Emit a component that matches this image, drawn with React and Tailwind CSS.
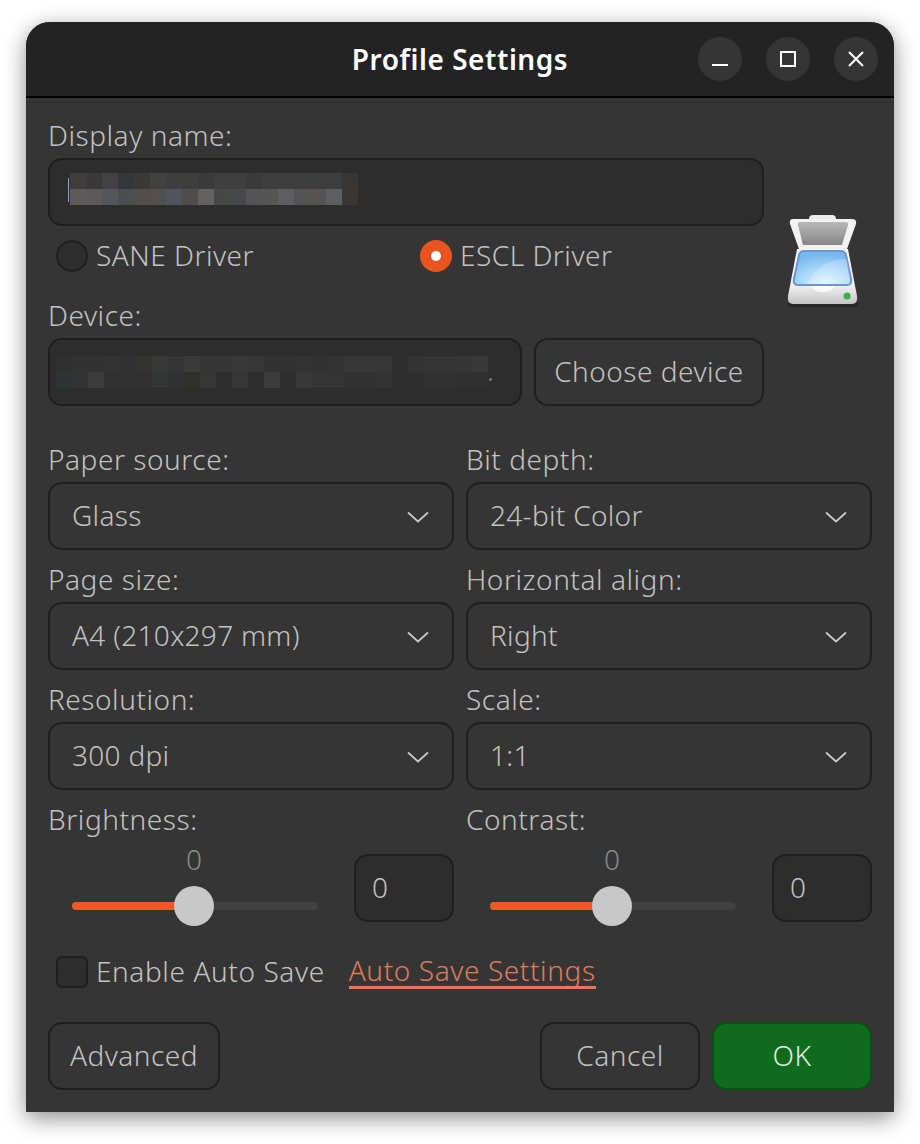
const FONT = "font-['Noto_Sans','Open_Sans',sans-serif]";

const NAME_ROWS = [
  ['#413d3c', '#393939', '#424242', '#34363a', '#3a3938', '#414141', '#3e3e3e', '#3e3e3e', '#3a3a3a', '#3f3f3f', '#3f3f3f', '#3a3a3a', '#3e3e3e', '#3e3e3e', '#3d3d3d', '#3c3e3d', '#3d3d3d', '#383634'],
  ['#5e5a59', '#5a5a5a', '#53565a', '#4d4e52', '#524e4c', '#514f4f', '#53545b', '#504c4c', '#626260', '#474747', '#47484c', '#545454', '#555555', '#5e5e62', '#545454', '#565452', '#5e5e60', '#3a3632'],
];

const DEVICE_ROWS = [
  ['#303030', '#323232', '#323232', '#333333', '#313131', '#333331', '#383838', '#343434', '#3a3a3a', '#353535', '#353535', '#383838', '#363636', '#323232', '#323232', '#333333', '#313131', '#333333', '#373737', '#373737', '#373737', '#2d2d2d', '#333333', '#343434', '#343434', '#353535', '#393939'],
  ['#2f3333', '#333333', '#3b3b3b', '#313131', '#313131', '#313131', '#323533', '#313131', '#2f2f2c', '#363636', '#2d2d2d', '#363636', '#2e2e2e', '#3c3c3c', '#2e2e2e', '#383838', '#343434', '#343434', '#313131', '#313131', '#333333', '#2e2e2e', '#2e2e2e', '#313131', '#313131', '#303030', '#303030'],
];

const Blur = ({ rows }) => (
  <div className="flex flex-col">
    {rows.map((row, i) => (
      <div key={i} className="flex">
        {row.map((c, j) => (
          <div key={j} className="w-4 h-4" style={{ backgroundColor: c }} />
        ))}
      </div>
    ))}
  </div>
);

const Label = ({ children }) => (
  <div className="h-[42px] flex items-center pb-1 text-[28px] tracking-[0.55px] text-[#c2c2c2] font-light leading-none">{children}</div>
);

const Chevron = () => (
  <svg width="22" height="12" viewBox="0 0 22 12" fill="none" stroke="#c8c8c8" strokeWidth="1.75" className="shrink-0 mt-0.5">
    <path d="M1 1.5 L11 10.5 L21 1.5" />
  </svg>
);

const Select = ({ label, value }) => (
  <div>
    <Label>{label}</Label>
    <div className="h-[68px] rounded-[14px] border-2 border-[#1f1f1f] bg-[#353535] flex items-center justify-between pl-[22px] pr-[23px] text-[28px] tracking-[0.3px] text-[#c2c2c2] font-light">
      <span className="-mt-0.5">{value}</span>
      <Chevron />
    </div>
  </div>
);

const Slider = ({ label }) => (
  <div>
    <Label>{label}</Label>
    <div className="mt-3 flex items-center h-[68px]">
      <div className="w-[306px] pl-6 pr-9 shrink-0">
        <div className="relative h-2 rounded-full bg-[#414141] translate-y-[18px]">
          <div className="h-2 w-[122px] rounded-full bg-[#ee5a24]" />
          <div className="absolute left-[102px] top-[-16px] w-10 h-10 rounded-full bg-[#c8c8c8]" />
          <span className="absolute left-[102px] top-[-57px] w-10 text-center text-[28px] leading-none font-light text-[#8a8a8a]">0</span>
        </div>
      </div>
      <div className="w-[100px] h-[68px] rounded-[14px] border-2 border-[#1f1f1f] bg-[#2d2d2d] flex items-center pl-4 pb-0.5 text-[28px] text-[#c2c2c2] font-light">0</div>
    </div>
  </div>
);

const Button = ({ children, className }) => (
  <button className={`h-[68px] rounded-[14px] border-2 pb-0.5 text-[28px] tracking-[0.5px] font-light flex items-center justify-center ${className}`}>{children}</button>
);

const Scanner = () => (
  <svg width="76" height="96" viewBox="0 0 76 96" className="shrink-0 blur-[0.4px]">
    <defs>
      <linearGradient id="lid" x1="0" y1="0" x2="0" y2="1">
        <stop offset="0" stopColor="#b8b8b8" />
        <stop offset="1" stopColor="#868686" />
      </linearGradient>
      <linearGradient id="base" x1="0" y1="0" x2="0" y2="1">
        <stop offset="0" stopColor="#f6f6f6" />
        <stop offset="0.7" stopColor="#ececec" />
        <stop offset="1" stopColor="#c4c4c4" />
      </linearGradient>
      <radialGradient id="glass" cx="0.55" cy="0.95" r="0.85">
        <stop offset="0" stopColor="#dff3fd" />
        <stop offset="0.55" stopColor="#a6d6f8" />
        <stop offset="1" stopColor="#78b8ee" />
      </radialGradient>
    </defs>
    <rect x="3" y="88" width="70" height="5" rx="2" fill="#000" opacity="0.25" />
    <path d="M24 5 Q24 1 28 1 H47 Q51 1 51 5 L51 7 H24 Z" fill="#ececec" />
    <path d="M8 5 H67 Q72 5 71 10 L62 35 H14 L5 10 Q4 5 8 5 Z" fill="#f2f2f2" />
    <path d="M13 11 Q12 8 16 8 H60 Q64 8 63 11 L57 31 H18 Z" fill="url(#lid)" />
    <path d="M12 35 H63 L72 82 Q73 90 67 90 H8 Q2 90 3 82 Z" fill="url(#base)" />
    <path d="M19 37 H56 Q60 37 61 41 L66 65 Q67 71 62 71 H13 Q8 71 9 65 L14 41 Q15 37 19 37 Z" fill="url(#glass)" stroke="#6d94d2" strokeWidth="2" />
    <path d="M30 58 Q44 44 62 45 L65 64 Q65 70 60 70 H20 Q26 66 30 58 Z" fill="#ffffff" opacity="0.22" />
    <path d="M26 72 H50 Q47 78 38 78 Q29 78 26 72 Z" fill="#ffffff" opacity="0.75" />
    <circle cx="62" cy="82" r="3.5" fill="#35b53a" />
  </svg>
);

const CloseBtn = ({ children }) => (
  <div className="w-11 h-11 rounded-full bg-[#353535] flex items-center justify-center">{children}</div>
);

export default function App() {
  return (
    <div className={`min-h-[1144px] bg-white pt-[22px] pl-[26px] ${FONT}`}>
      <div className="w-[868px] h-[1090px] rounded-t-[24px] bg-[#353535] shadow-[0_6px_22px_rgba(0,0,0,0.45)] overflow-hidden">
        <div className="relative h-[76px] bg-[#232323] border-b-2 border-black flex items-center justify-end pr-4 gap-6">
          <div className="absolute inset-0 flex items-center justify-center text-[28px] tracking-[0.55px] font-semibold text-white">Profile Settings</div>
          <CloseBtn>
            <svg width="16" height="16" viewBox="0 0 16 16" className="relative"><rect y="13" width="16" height="2" fill="#fff" /></svg>
          </CloseBtn>
          <CloseBtn>
            <svg width="16" height="16" viewBox="0 0 16 16" fill="none" stroke="#fff" strokeWidth="2"><rect x="1" y="1" width="14" height="14" /></svg>
          </CloseBtn>
          <CloseBtn>
            <svg width="16" height="16" viewBox="0 0 16 16" fill="none" stroke="#fff" strokeWidth="2"><path d="M1 1 L15 15 M15 1 L1 15" /></svg>
          </CloseBtn>
        </div>

        <div className="px-[22px] pt-[18px]">
          <div className="flex">
            <div className="w-[716px]">
              <Label>Display name:</Label>
              <div className="relative h-[68px] rounded-[14px] border-2 border-[#1f1f1f] bg-[#2d2d2d] flex items-center pl-5 pb-[6px]">
                <div className="absolute left-[18px] top-[18px] w-px h-6 bg-[#7fa6d6]" />
                <Blur rows={NAME_ROWS} />
              </div>
              <div className="h-[60px] mb-[10px] flex items-center text-[28px] tracking-[0.5px] text-[#c2c2c2] font-light">
                <div className="w-[372px] pl-2 flex items-center gap-2">
                  <div className="w-8 h-8 rounded-full border-2 border-[#1f1f1f] bg-[#2d2d2d]" />
                  <span className="-mt-0.5">SANE Driver</span>
                </div>
                <div className="flex items-center gap-2">
                  <div className="w-8 h-8 rounded-full bg-[#e95420] flex items-center justify-center">
                    <div className="w-[10px] h-[10px] rounded-full bg-white" />
                  </div>
                  <span className="-mt-0.5">ESCL Driver</span>
                </div>
              </div>
              <Label>Device:</Label>
              <div className="flex gap-3">
                <div className="relative flex-1 h-[68px] rounded-[14px] border-2 border-[#1f1f1f] bg-[#2d2d2d] flex items-center pl-[6px] overflow-hidden">
                  <Blur rows={DEVICE_ROWS} />
                  <div className="w-[3px] h-[3px] ml-[1px] mt-[14px] rounded-full bg-[#777777]" />
                </div>
                <Button className="w-[230px] border-[#1f1f1f] bg-[#353535] text-[#c2c2c2]">Choose device</Button>
              </div>
            </div>
            <div className="pl-[21px] pt-[98px]">
              <Scanner />
            </div>
          </div>

          <div className="mt-[34px] grid grid-cols-2 gap-x-3 gap-y-[10px]">
            <Select label="Paper source:" value="Glass" />
            <Select label="Bit depth:" value="24-bit Color" />
            <Select label="Page size:" value="A4 (210x297 mm)" />
            <Select label="Horizontal align:" value="Right" />
            <Select label="Resolution:" value="300 dpi" />
            <Select label="Scale:" value="1:1" />
            <Slider label="Brightness:" />
            <Slider label="Contrast:" />
          </div>

          <div className="mt-[34px] h-8 pl-2 flex items-center text-[28px] tracking-[0.6px] font-light text-[#c2c2c2]">
            <div className="w-8 h-8 rounded-md border-2 border-[#1f1f1f] bg-[#2d2d2d]" />
            <span className="ml-2 -mt-0.5">Enable Auto Save</span>
            <span className="ml-[24px] text-[#e07a5a] border-b-[3px] border-[#e07a5a] leading-[32px] -mt-px">Auto Save Settings</span>
          </div>

          <div className="mt-[34px] flex">
            <Button className="w-[172px] border-[#1f1f1f] bg-[#353535] text-[#c2c2c2]">Advanced</Button>
            <div className="ml-auto flex gap-3">
              <Button className="w-40 border-[#1f1f1f] bg-[#353535] text-[#c2c2c2]">Cancel</Button>
              <Button className="w-40 border-[#0a4f12] bg-[#0f6b1d] text-[#dfeee0]">OK</Button>
            </div>
          </div>
        </div>
      </div>
    </div>
  );
}
